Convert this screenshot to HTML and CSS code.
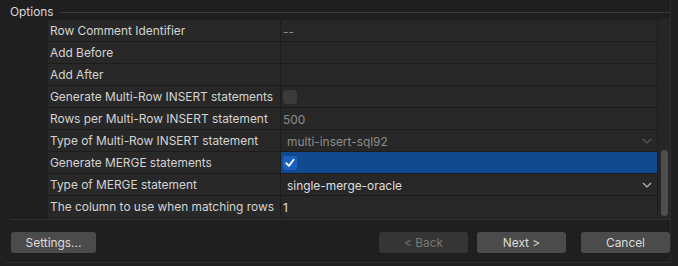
FILE: index.html
```html
<!DOCTYPE html>
<html>
<head>
<meta charset="utf-8">
<link rel="stylesheet" href="styles.css">
</head>
<body>
<div class="window">
  <div class="group-title">
    <span class="legend">Options</span>
    <span class="legend-line"></span>
  </div>
  <div class="table-wrap">
    <div class="table">
      <div class="row"><div class="label">Row Comment Identifier</div><div class="value dim">--</div></div>
      <div class="row"><div class="label">Add Before</div><div class="value"></div></div>
      <div class="row"><div class="label">Add After</div><div class="value"></div></div>
      <div class="row"><div class="label">Generate Multi-Row INSERT statements</div><div class="value"><span class="check"></span></div></div>
      <div class="row"><div class="label">Rows per Multi-Row INSERT statement</div><div class="value dim">500</div></div>
      <div class="row"><div class="label">Type of Multi-Row INSERT statement</div><div class="value dim combo"><span>multi-insert-sql92</span><svg class="chev" width="10" height="6" viewBox="0 0 10 6"><path d="M1 1 L5 5 L9 1" fill="none" stroke="#5d5d5d" stroke-width="1.2"/></svg></div></div>
      <div class="row"><div class="label">Generate MERGE statements</div><div class="value selected"><span class="check on"><svg width="14" height="14" viewBox="0 0 14 14"><path d="M3.3 7.2 L5.9 9.9 L10.6 3.8" fill="none" stroke="#ffffff" stroke-width="1.8" stroke-linecap="round" stroke-linejoin="round"/></svg></span></div></div>
      <div class="row"><div class="label">Type of MERGE statement</div><div class="value combo"><span>single-merge-oracle</span><svg class="chev" width="10" height="6" viewBox="0 0 10 6"><path d="M1 1 L5 5 L9 1" fill="none" stroke="#bdbdbd" stroke-width="1.2"/></svg></div></div>
      <div class="row"><div class="label">The column to use when matching rows</div><div class="value plain">1</div></div>
    </div>
    <div class="scrollbar"><div class="thumb"></div></div>
  </div>
  <div class="separator"></div>
  <div class="buttons">
    <button class="btn settings">Settings...</button>
    <div class="spacer"></div>
    <button class="btn back" disabled>&lt; Back</button>
    <button class="btn next">Next &gt;</button>
    <button class="btn cancel">Cancel</button>
  </div>
</div>
</body>
</html>
```

FILE: styles.css
```css
html, body {
  margin: 0;
  padding: 0;
  background: #1f1f1f;
  width: 678px;
  height: 266px;
  overflow: hidden;
}
body {
  font-family: Inter, "Noto Sans", sans-serif;
  font-size: 11.9px;
  color: #d6d6d6;
}
.window {
  width: 670px;
  height: 262px;
  border-right: 1px solid #2c2c2c;
  border-bottom: 1px solid #2c2c2c;
  border-bottom-left-radius: 8px;
  background: #1f1f1f;
  display: flex;
  flex-direction: column;
}
.group-title {
  display: flex;
  align-items: center;
  height: 14px;
  padding-top: 5px;
  padding-left: 10px;
}
.legend {
  color: #d8d8d8;
  line-height: 14px;
}
.legend-line {
  flex: 1;
  height: 1px;
  background: #3a3a3a;
  margin-left: 6px;
}
.table-wrap {
  margin-left: 48px;
  height: 200px;
  display: flex;
  background: #242424;
}
.table {
  flex: 1;
  display: flex;
  flex-direction: column;
}
.row {
  display: flex;
  height: 22px;
  border-top: 1px solid #1c1c1c;
  box-sizing: border-box;
}
.label {
  width: 230px;
  padding-left: 2px;
  padding-top: 1px;
  background: #282828;
  border-right: 1px solid #1c1c1c;
  line-height: 20px;
  white-space: nowrap;
  overflow: hidden;
  color: #d4d4d4;
}
.value {
  flex: 1;
  background: #272727;
  border-right: 1px solid #1c1c1c;
  display: flex;
  align-items: center;
  padding-left: 2px;
  padding-top: 1px;
  white-space: nowrap;
}
.value.dim {
  color: #8c8c8c;
}
.value.plain {
  color: #e0e0e0;
}
.value.combo {
  padding-left: 6px;
  justify-content: space-between;
  padding-right: 5px;
}
.value.combo:not(.dim) {
  color: #dedede;
}
.value.selected {
  background: #114a8e;
  padding-top: 0;
}
.check {
  width: 14px;
  height: 14px;
  border-radius: 3px;
  background: #3b3b3b;
  display: block;
}
.check.on {
  background: #1c5fbd;
}
.check svg {
  display: block;
}
.scrollbar {
  width: 12px;
  background: #262626;
  display: flex;
  justify-content: center;
  align-items: flex-end;
  padding-bottom: 3px;
  box-sizing: border-box;
}
.thumb {
  width: 7px;
  height: 66px;
  border-radius: 4px;
  background: #4e4e4e;
}
.separator {
  height: 1px;
  background: #2f2f2f;
  margin: 0 0 0 10px;
}
.buttons {
  display: flex;
  padding: 12px 0 0 11px;
  gap: 9px;
}
.spacer {
  flex: 1;
}
.btn {
  font-family: Inter, "Noto Sans", sans-serif;
  font-size: 11.9px;
  height: 21px;
  width: 89px;
  border: none;
  border-radius: 3px;
  background: #4b4b4b;
  color: #dcdcdc;
  padding: 0;
  margin: 0;
}
.btn.settings {
  width: 85px;
}
.btn.back {
  background: #353535;
  color: #777777;
}
.btn.cancel {
  margin-left: 6px;
}
```
